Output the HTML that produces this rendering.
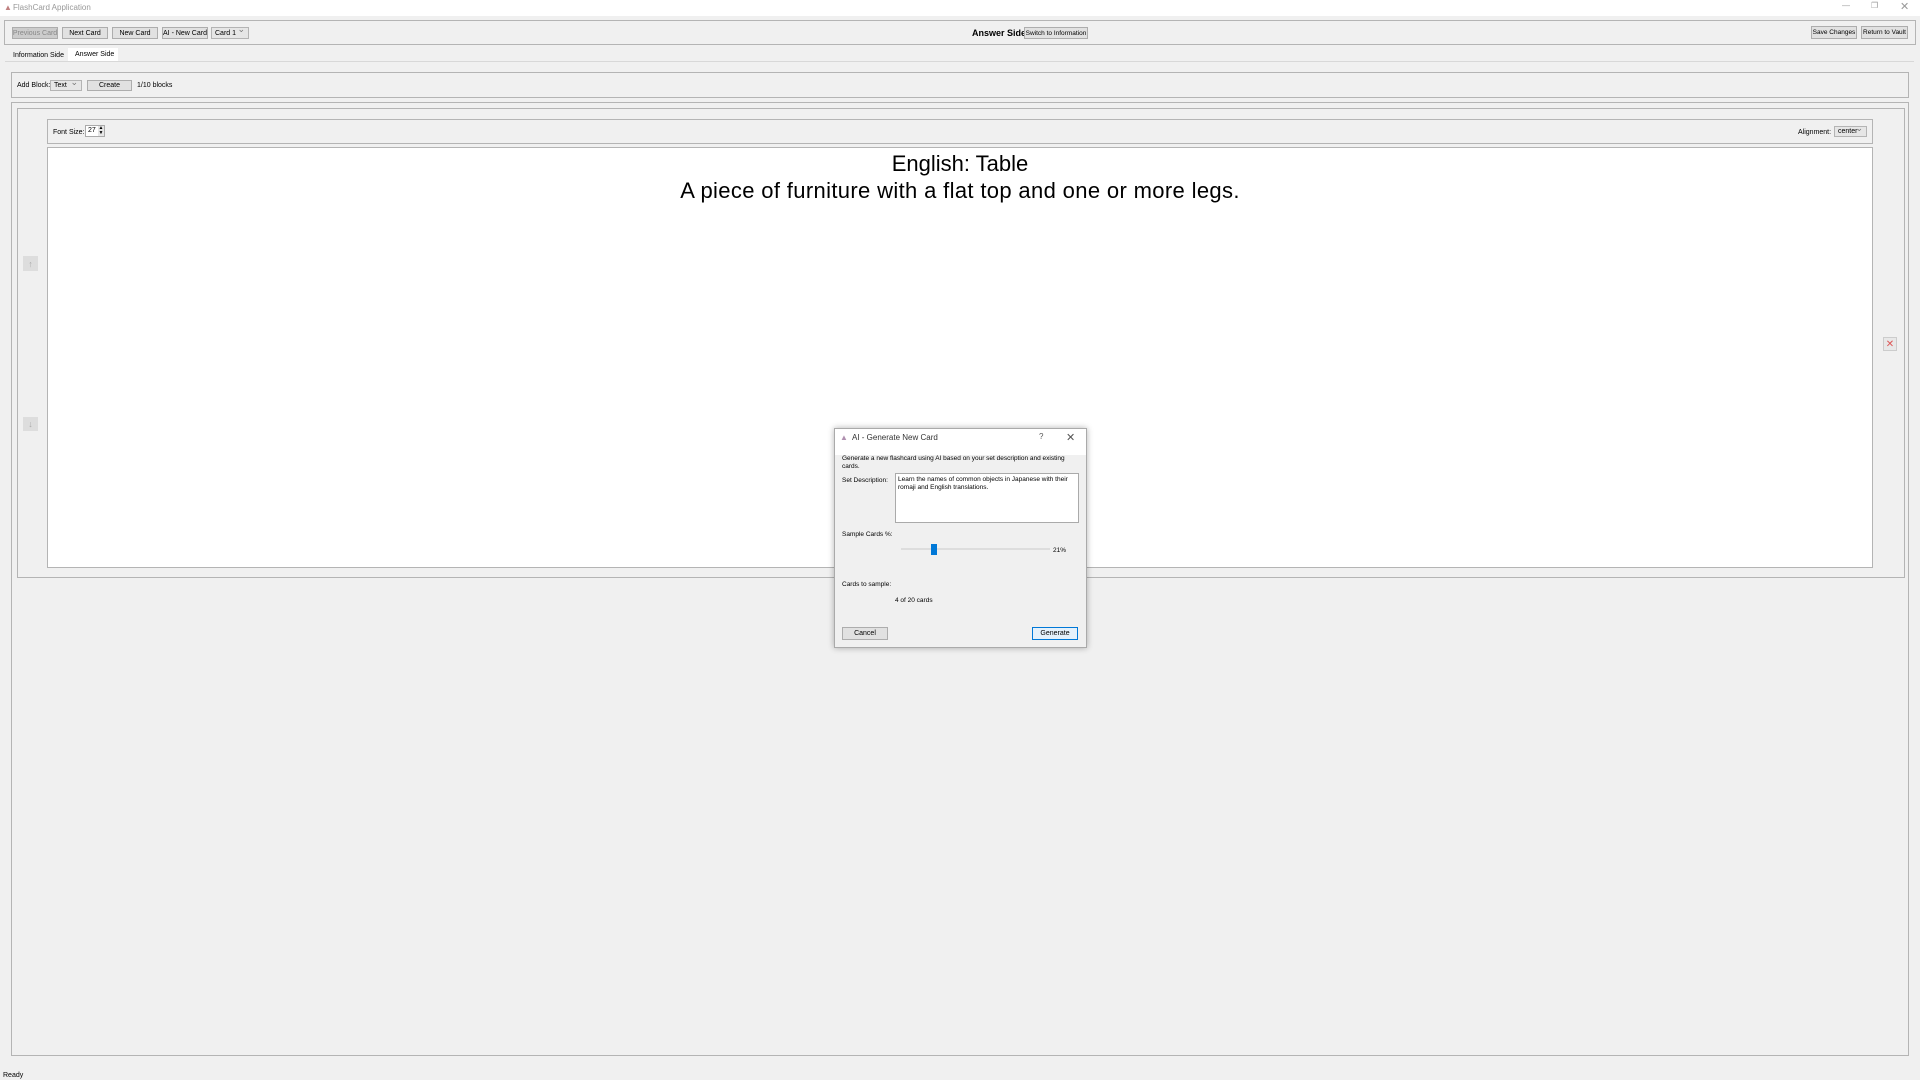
<!DOCTYPE html>
<html><head><style>
*{box-sizing:border-box;margin:0;padding:0}
body{width:1920px;height:1080px;background:#f0f0f0;font-family:"Liberation Sans",sans-serif;font-size:10px;color:#000;position:relative;overflow:hidden}
.a{position:absolute}
.btn{position:absolute;background:#e1e1e1;border:1px solid #adadad;font-size:7px;text-align:center;white-space:nowrap;overflow:hidden;display:flex;align-items:center;justify-content:center}
.box{position:absolute;border:1px solid #b4b4b4}
.t{position:absolute;font-size:8px;white-space:nowrap}
.combo{position:absolute;background:#e6e6e6;border:1px solid #b4b4b4;font-size:7px;padding-left:3px;display:flex;align-items:center;white-space:nowrap}
.combo:after{content:"⌄";position:absolute;right:3px;top:-4px;color:#777;font-size:9px}
</style></head><body>
<div class="a" style="left:0;top:0;width:1920px;height:16px;background:#fff"></div>
<div class="t" style="left:4px;top:3px;color:#c08080">▲</div>
<div class="t" style="left:13px;top:3px;color:#999;font-size:8px">FlashCard Application</div>
<div class="t" style="left:1842px;top:1px;color:#999">—</div>
<div class="t" style="left:1871px;top:1px;color:#999">❐</div>
<div class="t" style="left:1900px;top:0px;color:#999;font-size:11px">✕</div>

<div class="box" style="left:4px;top:20px;width:1912px;height:25px"></div>
<div class="btn" style="left:12px;top:27px;width:46px;height:12px;background:#ccc;color:#888">Previous Card</div>
<div class="btn" style="left:62px;top:27px;width:46px;height:12px">Next Card</div>
<div class="btn" style="left:112px;top:27px;width:46px;height:12px">New Card</div>
<div class="btn" style="left:162px;top:27px;width:46px;height:12px">AI - New Card</div>
<div class="combo" style="left:211px;top:27px;width:38px;height:12px">Card 1</div>
<div class="t" style="left:972px;top:28px;font-weight:bold;font-size:9px">Answer Side</div>
<div class="btn" style="left:1024px;top:27px;width:64px;height:12px;font-size:6.5px">Switch to Information</div>
<div class="btn" style="left:1811px;top:26px;width:46px;height:13px;font-size:6.5px">Save Changes</div>
<div class="btn" style="left:1861px;top:26px;width:47px;height:13px;font-size:6.5px">Return to Vault</div>

<div class="a" style="left:5px;top:61px;width:1909px;height:1px;background:#d8d8d8"></div>
<div class="t" style="left:13px;top:52px;font-size:7px">Information Side</div>
<div class="a" style="left:68px;top:48px;width:50px;height:13px;background:#fff"></div>
<div class="t" style="left:75px;top:51px;font-size:7px">Answer Side</div>

<div class="box" style="left:11px;top:72px;width:1898px;height:26px"></div>
<div class="t" style="left:17px;top:82px;font-size:7px">Add Block:</div>
<div class="combo" style="left:50px;top:80px;width:32px;height:11px">Text</div>
<div class="btn" style="left:87px;top:80px;width:45px;height:11px">Create</div>
<div class="t" style="left:137px;top:82px;font-size:7px">1/10 blocks</div>

<div class="box" style="left:11px;top:102px;width:1898px;height:954px"></div>
<div class="box" style="left:17px;top:108px;width:1888px;height:470px"></div>
<div class="box" style="left:47px;top:119px;width:1826px;height:25px"></div>
<div class="t" style="left:53px;top:129px;font-size:7px">Font Size:</div>
<div class="a" style="left:85px;top:125px;width:20px;height:12px;background:#fff;border:1px solid #aaa;font-size:7px;padding-left:2px;line-height:10px">27</div>
<div class="a" style="left:98px;top:126px;width:6px;height:10px;background:#e6e6e6;font-size:5px;line-height:5px;text-align:center">▲<br>▼</div>
<div class="t" style="left:1798px;top:129px;font-size:7px">Alignment:</div>
<div class="combo" style="left:1834px;top:126px;width:33px;height:11px">center</div>
<div class="a" style="left:47px;top:147px;width:1826px;height:421px;background:#fff;border:1px solid #b4b4b4"></div>
<div class="a" style="left:47px;top:150px;width:1826px;text-align:center;font-size:22px;line-height:27px">English: Table<br><span style="letter-spacing:0.35px">A piece of furniture with a flat top and one or more legs.</span></div>
<div class="btn" style="left:23px;top:256px;width:15px;height:15px;background:#ddd;border-color:#ddd;color:#aaa;font-size:9px">↑</div>
<div class="btn" style="left:23px;top:417px;width:15px;height:14px;background:#ddd;border-color:#ddd;color:#aaa;font-size:9px">↓</div>
<div class="btn" style="left:1883px;top:337px;width:14px;height:14px;background:#e8e8e8;border-color:#ccc;color:#d55;font-size:10px">✕</div>
<div class="t" style="left:3px;top:1072px;font-size:7px">Ready</div>

<div class="a" style="left:834px;top:428px;width:253px;height:220px;background:#f0f0f0;border:1px solid #aaa;box-shadow:0 0 6px rgba(0,0,0,.3)"></div>
<div class="a" style="left:835px;top:429px;width:251px;height:26px;background:#fff"></div>
<div class="t" style="left:840px;top:433px;color:#b090b0;font-size:8px">▲</div>
<div class="t" style="left:852px;top:433px;font-size:8px;color:#333">AI - Generate New Card</div>
<div class="t" style="left:1039px;top:432px;color:#555">?</div>
<div class="t" style="left:1066px;top:431px;color:#555;font-size:11px">✕</div>
<div class="t" style="left:842px;top:455px;font-size:6.5px;line-height:8px">Generate a new flashcard using AI based on your set description and existing<br>cards.</div>
<div class="t" style="left:842px;top:477px;font-size:6.5px">Set Description:</div>
<div class="a" style="left:895px;top:473px;width:184px;height:50px;background:#fff;border:1px solid #aaa;font-size:6.5px;line-height:8px;padding:2px 2px">Learn the names of common objects in Japanese with their romaji and English translations.</div>
<div class="t" style="left:842px;top:531px;font-size:6.5px">Sample Cards %:</div>
<div class="a" style="left:901px;top:548px;width:149px;height:2px;background:#ddd"></div>
<div class="a" style="left:931px;top:544px;width:6px;height:11px;background:#0078d7"></div>
<div class="t" style="left:1053px;top:547px;font-size:6.5px">21%</div>
<div class="t" style="left:842px;top:581px;font-size:6.5px">Cards to sample:</div>
<div class="t" style="left:895px;top:597px;font-size:6.5px">4 of 20 cards</div>
<div class="btn" style="left:842px;top:627px;width:46px;height:13px">Cancel</div>
<div class="btn" style="left:1032px;top:627px;width:46px;height:13px;background:#e5f1fb;border-color:#0078d7">Generate</div>
</body></html>
